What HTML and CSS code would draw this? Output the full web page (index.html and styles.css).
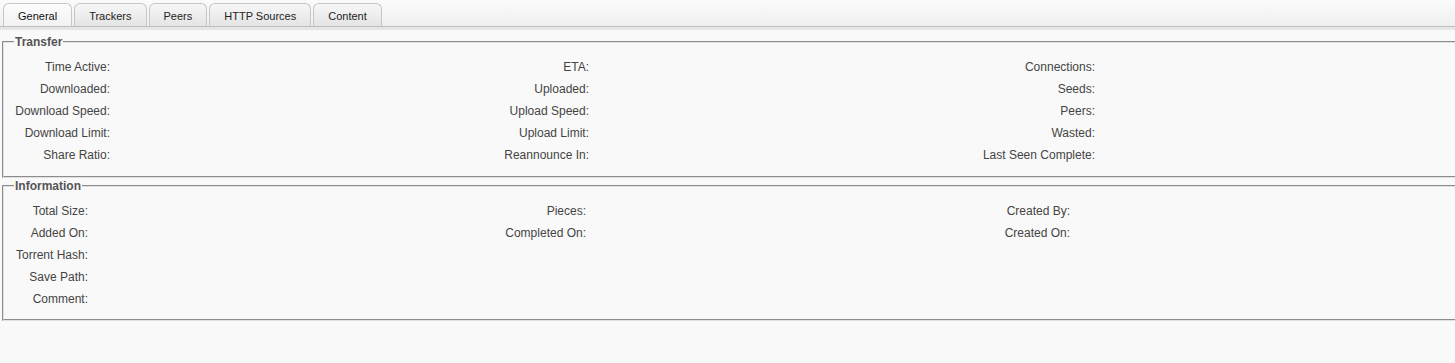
FILE: index.html
```html
<!DOCTYPE html>
<html>
<head>
<meta charset="utf-8">
<link rel="stylesheet" href="styles.css">
</head>
<body>
<div class="tabbar">
  <div class="tab selected">General</div>
  <div class="tab">Trackers</div>
  <div class="tab">Peers</div>
  <div class="tab">HTTP Sources</div>
  <div class="tab">Content</div>
</div>
<div class="panel">
  <fieldset class="box transfer">
    <legend>Transfer</legend>
    <div class="grid">
      <div class="lbl">Time Active:</div><div></div>
      <div class="lbl">ETA:</div><div></div>
      <div class="lbl">Connections:</div><div></div>
      <div class="lbl">Downloaded:</div><div></div>
      <div class="lbl">Uploaded:</div><div></div>
      <div class="lbl">Seeds:</div><div></div>
      <div class="lbl">Download Speed:</div><div></div>
      <div class="lbl">Upload Speed:</div><div></div>
      <div class="lbl">Peers:</div><div></div>
      <div class="lbl">Download Limit:</div><div></div>
      <div class="lbl">Upload Limit:</div><div></div>
      <div class="lbl">Wasted:</div><div></div>
      <div class="lbl">Share Ratio:</div><div></div>
      <div class="lbl">Reannounce In:</div><div></div>
      <div class="lbl">Last Seen Complete:</div><div></div>
    </div>
  </fieldset>
  <fieldset class="box info">
    <legend>Information</legend>
    <div class="grid">
      <div class="lbl">Total Size:</div><div></div>
      <div class="lbl">Pieces:</div><div></div>
      <div class="lbl">Created By:</div><div></div>
      <div class="lbl">Added On:</div><div></div>
      <div class="lbl">Completed On:</div><div></div>
      <div class="lbl">Created On:</div><div></div>
      <div class="lbl">Torrent Hash:</div><div class="wide"></div>
      <div class="lbl">Save Path:</div><div class="wide"></div>
      <div class="lbl">Comment:</div><div class="wide"></div>
    </div>
  </fieldset>
</div>
</body>
</html>
```
FILE: styles.css
```css
html, body {
  margin: 0;
  padding: 0;
  background: #f9f9f9;
  overflow: hidden;
  font-family: "Liberation Sans", Arial, sans-serif;
}

.tabbar {
  display: flex;
  align-items: flex-end;
  height: 26px;
  padding-left: 3px;
  background: linear-gradient(#fbfbfb, #efefef);
  border-bottom: 1px solid #bdbdbd;
  box-shadow: 0 3px 0 #e6e6e6;
  gap: 2px;
}

.tab {
  height: 22px;
  line-height: 24px;
  padding: 0 14px;
  font-size: 11px;
  color: #222;
  border: 1px solid #c6c6c6;
  border-bottom: none;
  border-radius: 6px 6px 0 0;
  background: linear-gradient(#f7f7f7, #e4e4e4);
}

.tab.selected {
  background: linear-gradient(#fdfdfd, #f2f2f2);
  color: #111;
}

.panel {
  padding-top: 8px;
}

.box {
  margin: 0 -20px 0 2px;
  padding: 0;
  border: 2px groove #e0e0e0;
  min-width: 0;
}

.box legend {
  margin-left: 10px;
  padding: 0 1px;
  font-size: 12px;
  font-weight: bold;
  color: #555;
  line-height: 14px;
}

.box + .box {
  margin-top: 1px;
}

.grid {
  display: grid;
  grid-auto-rows: 22px;
  font-size: 12px;
  color: #444;
  line-height: 22px;
}

.transfer .grid {
  grid-template-columns: 106px 380px 99px 391px 115px 1fr;
  padding: 7px 0 10px;
}

.info .grid {
  grid-template-columns: 84px 398px 100px 384px 100px 1fr;
  padding: 7px 0 9px;
}

.lbl {
  text-align: right;
  white-space: nowrap;
}

.wide {
  grid-column: span 5;
}
```
